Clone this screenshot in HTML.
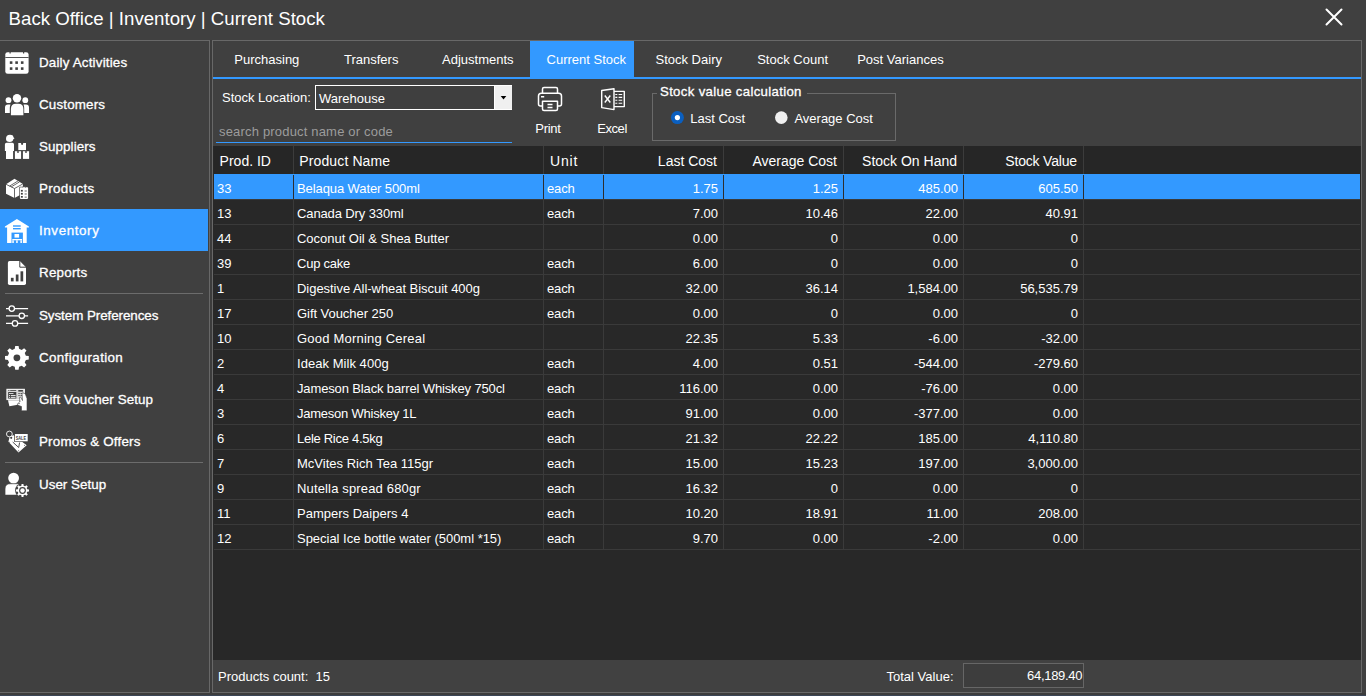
<!DOCTYPE html>
<html><head><meta charset="utf-8"><style>
html,body{margin:0;padding:0;width:1366px;height:696px;overflow:hidden;background:#404040;font-family:"Liberation Sans", sans-serif;}
.t{position:absolute;white-space:pre;line-height:1;}
.r{position:absolute;box-sizing:content-box;}
</style></head><body>
<div class="t" style="left:8.6px;top:9.70px;font-size:18.67px;color:#ffffff;font-weight:400;">Back Office | Inventory | Current Stock</div>
<svg class="r" style="left:1324px;top:7px" width="20" height="20" viewBox="0 0 20 20"><path d="M2.5 2.5 L17.5 17.5 M17.5 2.5 L2.5 17.5" stroke="#fff" stroke-width="2" stroke-linecap="round"/></svg>
<div class="r" style="left:210px;top:40px;width:2px;height:653px;background:#3c3c3c;"></div>
<div class="r" style="left:-1px;top:40px;width:209px;height:651px;border:1px solid #686868;"></div>
<div class="r" style="left:212px;top:40px;width:1148px;height:651px;border:1px solid #686868;"></div>
<div class="r" style="left:0px;top:693px;width:1366px;height:2px;background:#3c3c3c;"></div>
<div class="r" style="left:0px;top:695px;width:1366px;height:1px;background:#3a4556;"></div>
<div class="r" style="left:0px;top:209px;width:208px;height:42px;background:#3399ff;"></div>
<div class="r" style="left:5px;top:293px;width:198px;height:1px;background:#6c6c6c;"></div>
<div class="r" style="left:5px;top:462px;width:198px;height:1px;background:#6c6c6c;"></div>
<div class="t" style="left:39px;top:55.66px;font-size:13.4px;color:#ffffff;font-weight:400;-webkit-text-stroke:0.3px #fff;letter-spacing:0.170px;">Daily Activities</div>
<div class="t" style="left:39px;top:97.66px;font-size:13.4px;color:#ffffff;font-weight:400;-webkit-text-stroke:0.3px #fff;letter-spacing:0.163px;">Customers</div>
<div class="t" style="left:39px;top:139.66px;font-size:13.4px;color:#ffffff;font-weight:400;-webkit-text-stroke:0.3px #fff;letter-spacing:0.087px;">Suppliers</div>
<div class="t" style="left:39px;top:181.66px;font-size:13.4px;color:#ffffff;font-weight:400;-webkit-text-stroke:0.3px #fff;letter-spacing:0.336px;">Products</div>
<div class="t" style="left:39px;top:223.66px;font-size:13.4px;color:#ffffff;font-weight:400;-webkit-text-stroke:0.3px #fff;letter-spacing:0.600px;">Inventory</div>
<div class="t" style="left:39px;top:265.66px;font-size:13.4px;color:#ffffff;font-weight:400;-webkit-text-stroke:0.3px #fff;letter-spacing:0.217px;">Reports</div>
<div class="t" style="left:39px;top:308.66px;font-size:13.4px;color:#ffffff;font-weight:400;-webkit-text-stroke:0.3px #fff;letter-spacing:-0.068px;">System Preferences</div>
<div class="t" style="left:39px;top:350.66px;font-size:13.4px;color:#ffffff;font-weight:400;-webkit-text-stroke:0.3px #fff;letter-spacing:0.342px;">Configuration</div>
<div class="t" style="left:39px;top:392.66px;font-size:13.4px;color:#ffffff;font-weight:400;-webkit-text-stroke:0.3px #fff;letter-spacing:0.097px;">Gift Voucher Setup</div>
<div class="t" style="left:39px;top:434.66px;font-size:13.4px;color:#ffffff;font-weight:400;-webkit-text-stroke:0.3px #fff;letter-spacing:0.193px;">Promos &amp; Offers</div>
<div class="t" style="left:39px;top:477.66px;font-size:13.4px;color:#ffffff;font-weight:400;-webkit-text-stroke:0.3px #fff;letter-spacing:0.017px;">User Setup</div>
<svg class="r" style="left:0;top:0" width="36" height="696" viewBox="0 0 36 696"><rect x="5.3" y="52.2" width="23.3" height="21.6" rx="2.4" fill="#ffffff"/>
<rect x="5.3" y="57.1" width="23.3" height="0.9" fill="#404040"/>
<rect x="9.5" y="51.5" width="1.2" height="2" fill="#404040"/><rect x="23" y="51.5" width="1.2" height="2" fill="#404040"/>
<rect x="9.799999999999999" y="61.300000000000004" width="2.6" height="2.6" fill="#404040"/><rect x="9.799999999999999" y="67.3" width="2.6" height="2.6" fill="#404040"/><rect x="15.3" y="61.300000000000004" width="2.6" height="2.6" fill="#404040"/><rect x="15.3" y="67.3" width="2.6" height="2.6" fill="#404040"/><rect x="20.9" y="61.300000000000004" width="2.6" height="2.6" fill="#404040"/><rect x="20.9" y="67.3" width="2.6" height="2.6" fill="#404040"/><circle cx="17" cy="98.3" r="4.2" fill="#ffffff"/>
<circle cx="8.5" cy="100.2" r="2.9" fill="#ffffff"/><circle cx="25.3" cy="100.2" r="2.9" fill="#ffffff"/>
<path d="M5 113 V107.5 Q5 104.5 8 104.5 H10.5 Q9.8 106 9.8 108 V113 Z" fill="#ffffff"/>
<path d="M29 113 V107.5 Q29 104.5 26 104.5 H23.5 Q24.2 106 24.2 108 V113 Z" fill="#ffffff"/>
<path d="M10.9 115.3 V109 Q10.9 103.8 16 103.8 H18.3 Q23.4 103.8 23.4 109 V115.3 Z" fill="#ffffff"/>
<path d="M6 139 Q6 134.8 10 134.8 Q13.2 134.8 13.4 137.2 L14.5 138.3 L13.3 139.2 Q12.8 141.9 9.8 141.9 Q6 141.9 6 139 Z" fill="#ffffff"/>
<path d="M4.9 151 V144.4 Q4.9 142.8 6.5 142.8 H12.4 Q14 142.8 14 144.4 V151 H13.1 V158.9 H6 V151 Z" fill="#ffffff"/>
<rect x="18.3" y="143" width="7.7" height="7.1" fill="#ffffff"/><path d="M20.9 143 H23.3 L22.6 145 H21.6 Z" fill="#404040"/>
<rect x="14.9" y="151.2" width="6.2" height="7.7" fill="#ffffff"/><path d="M16.9 151.2 H19.1 L18.5 153 H17.5 Z" fill="#404040"/>
<rect x="22.9" y="151.2" width="6.2" height="7.7" fill="#ffffff"/><path d="M24.9 151.2 H27.1 L26.5 153 H25.5 Z" fill="#404040"/>
<path d="M6 184.3 L14.5 178.8 L22.9 183.9 L22.9 193.5 L14.5 198.1 L6 193.7 Z" fill="#ffffff"/>
<path d="M6 184.3 L14.5 188.5 L22.9 183.9 M14.5 188.5 V198.1 M9.6 186.1 L17.9 181 M11.2 186.9 L19.5 181.9" stroke="#404040" stroke-width="0.8" fill="none"/>
<rect x="19.3" y="186.7" width="9.4" height="12.8" rx="1" fill="#404040"/>
<rect x="19.9" y="187.3" width="8.2" height="11.6" rx="0.8" fill="#ffffff"/>
<rect x="21.9" y="186.8" width="4" height="1.2" rx="0.5" fill="#404040"/><rect x="22.3" y="186.9" width="3.2" height="0.9" fill="#ffffff"/>
<g fill="#404040"><rect x="20.9" y="189.9" width="1.9" height="1.7"/><rect x="20.9" y="192.9" width="1.9" height="1.7"/><rect x="20.9" y="196" width="1.9" height="1.7"/>
<rect x="24.6" y="190.6" width="2.2" height="0.8"/><rect x="24.6" y="193.6" width="2.2" height="0.8"/><rect x="24.6" y="196.7" width="2.2" height="0.8"/></g>
<path d="M4.9 226.5 L16.9 218.9 L28.9 226.5 L28.9 227.6 L26.7 227.6 L26.7 243 L7.1 243 L7.1 227.6 L4.9 227.6 Z" fill="#ffffff"/>
<rect x="13" y="225.3" width="7.7" height="1.4" fill="#3399ff"/><rect x="13" y="228" width="7.7" height="1.4" fill="#3399ff"/>
<rect x="11.5" y="232.6" width="11.4" height="10.4" fill="#3399ff"/>
<rect x="14.5" y="234" width="4.6" height="3.6" fill="#ffffff"/>
<rect x="12.3" y="239" width="9.8" height="1.3" fill="#ffffff"/>
<rect x="12.3" y="240.3" width="1.5" height="2.7" fill="#ffffff"/><rect x="16.2" y="240.3" width="1.5" height="2.7" fill="#ffffff"/><rect x="20.4" y="240.3" width="1.5" height="2.7" fill="#ffffff"/>
<path d="M9.5 261 H19.8 L26 267.2 V283.2 Q26 285 24.3 285 H9.6 Q7.9 285 7.9 283.2 V262.7 Q7.9 261 9.5 261 Z" fill="#ffffff"/>
<path d="M19.8 261 V267.2 H26" stroke="#404040" stroke-width="1" fill="none"/>
<rect x="10.9" y="277.8" width="2.7" height="3.6" fill="#404040"/><rect x="15.8" y="274.5" width="2.7" height="6.9" fill="#404040"/><rect x="20.5" y="271.3" width="2.7" height="10.1" fill="#404040"/>
<g stroke="#ffffff" stroke-width="1.3" fill="none">
<path d="M6 308.6 H9 M14.6 308.6 H28.1"/><circle cx="11.8" cy="308.6" r="2.7"/>
<path d="M6 315.8 H19 M24.6 315.8 H28.1"/><circle cx="21.8" cy="315.8" r="2.7"/>
<path d="M6 323.4 H12.2 M17.8 323.4 H28.1"/><circle cx="15" cy="323.4" r="2.7"/>
</g><polygon points="25.85,355.65 28.78,356.11 28.78,359.49 25.85,359.95 24.74,362.61 26.50,365.01 24.11,367.40 21.71,365.64 19.05,366.75 18.59,369.68 15.21,369.68 14.75,366.75 12.09,365.64 9.69,367.40 7.30,365.01 9.06,362.61 7.95,359.95 5.02,359.49 5.02,356.11 7.95,355.65 9.06,352.99 7.30,350.59 9.69,348.20 12.09,349.96 14.75,348.85 15.21,345.92 18.59,345.92 19.05,348.85 21.71,349.96 24.11,348.20 26.50,350.59 24.74,352.99" fill="#ffffff"/><circle cx="16.9" cy="357.8" r="3.4" fill="#404040"/><path d="M8 400.3 L19.8 400.3 L19.2 404.6 L9.4 406.2 Z" fill="#ffffff"/>
<rect x="6.4" y="388.8" width="18.5" height="11.3" fill="#ffffff"/>
<rect x="7.2" y="389.6" width="16.9" height="9.7" fill="#d8d8d8"/>
<g fill="#404040"><rect x="8.2" y="390" width="1.2" height="0.8"/><rect x="10.2" y="390" width="6" height="0.8"/><rect x="18.3" y="390" width="4.6" height="1.6"/>
<rect x="18.3" y="393.1" width="1.5" height="0.8"/><rect x="20.5" y="393.1" width="2.4" height="0.8"/><rect x="18.3" y="395.1" width="1.5" height="0.8"/><rect x="20.5" y="395.1" width="2.4" height="0.8"/>
<rect x="8.2" y="392" width="8.1" height="6.5"/></g>
<g fill="#e0e0e0"><rect x="9" y="395" width="1.2" height="1.2"/><rect x="11" y="395" width="4.6" height="1.2"/><rect x="9" y="397" width="1.2" height="0.9"/><rect x="11" y="397" width="4.6" height="0.9"/><rect x="9" y="393" width="4.5" height="0.9"/></g>
<path d="M22 393 Q24.5 392.5 25.5 394.5 L27 398.5 L27 410.8 L21.5 410.8 L21.5 406.5 Q19.5 406 17.5 404.8 Q16.8 403.8 18 403.3 L19.5 403.6 Q18 402.5 19.5 402 L20 401.5 L19.4 398 Q19.4 396.8 20.5 397 L22.5 400.5 L22 393 Z" fill="#ffffff" stroke="#404040" stroke-width="0.6"/>
<circle cx="9.4" cy="434" r="2.9" stroke="#e8e8e8" stroke-width="1" fill="none"/>
<path d="M8.4 441.7 L9.8 436.2 L13.8 435.3 L15 436.5 L26.7 445.3 L18.5 452.5 Z" fill="#ffffff"/>
<path d="M12.7 442 L18.7 447.5 L19.6 442.5" stroke="#404040" stroke-width="0.9" fill="none"/>
<circle cx="11.2" cy="437.8" r="1.1" fill="#404040"/>
<circle cx="9.2" cy="442.2" r="0.5" fill="#404040"/><circle cx="24.6" cy="445.2" r="0.5" fill="#404040"/><circle cx="18.6" cy="450.8" r="0.5" fill="#404040"/>
<rect x="14.2" y="433.6" width="14" height="8.3" fill="#404040"/>
<rect x="14.9" y="434" width="12.8" height="7.3" fill="#ffffff"/>
<text x="15.7" y="439.9" font-family="Liberation Sans" font-weight="bold" font-size="5.6" textLength="10.4" lengthAdjust="spacingAndGlyphs" fill="#404040">SALE</text>
<circle cx="13.6" cy="478.1" r="5.4" fill="#ffffff"/>
<path d="M5.1 495 V489 Q5.1 483.8 10.5 483.8 H17 Q19 483.8 20 485 L17 495 Z" fill="#ffffff" stroke="#404040" stroke-width="0.5"/>
<circle cx="22.5" cy="490.5" r="7.3999999999999995" fill="#404040"/><polygon points="27.26,489.36 29.03,489.57 29.03,491.43 27.26,491.64 26.68,493.06 27.78,494.46 26.46,495.78 25.06,494.68 23.64,495.26 23.43,497.03 21.57,497.03 21.36,495.26 19.94,494.68 18.54,495.78 17.22,494.46 18.32,493.06 17.74,491.64 15.97,491.43 15.97,489.57 17.74,489.36 18.32,487.94 17.22,486.54 18.54,485.22 19.94,486.32 21.36,485.74 21.57,483.97 23.43,483.97 23.64,485.74 25.06,486.32 26.46,485.22 27.78,486.54 26.68,487.94" fill="#ffffff"/><circle cx="22.5" cy="490.5" r="3.4000000000000004" fill="#404040"/><circle cx="22.5" cy="490.5" r="2.2" fill="#ffffff"/></svg>
<div class="r" style="left:530px;top:41px;width:104px;height:36px;background:#3399ff;"></div>
<div class="r" style="left:213px;top:77px;width:1148px;height:2px;background:#3399ff;"></div>
<div class="t" style="left:234.3px;top:53.00px;font-size:13px;color:#ffffff;font-weight:400;">Purchasing</div>
<div class="t" style="left:344px;top:53.00px;font-size:13px;color:#ffffff;font-weight:400;">Transfers</div>
<div class="t" style="left:442px;top:53.00px;font-size:13px;color:#ffffff;font-weight:400;">Adjustments</div>
<div class="t" style="left:546.6px;top:53.00px;font-size:13px;color:#ffffff;font-weight:400;">Current Stock</div>
<div class="t" style="left:655.5px;top:53.00px;font-size:13px;color:#ffffff;font-weight:400;">Stock Dairy</div>
<div class="t" style="left:757.2px;top:53.00px;font-size:13px;color:#ffffff;font-weight:400;">Stock Count</div>
<div class="t" style="left:857.2px;top:53.00px;font-size:13px;color:#ffffff;font-weight:400;">Post Variances</div>
<div class="t" style="left:222px;top:91.00px;font-size:13px;color:#ffffff;font-weight:400;">Stock Location:</div>
<div class="r" style="left:315px;top:85px;width:195px;height:23px;border:1px solid #fff;background:#3f3f3f"></div>
<div class="r" style="left:494px;top:86px;width:17px;height:23px;background:#f0f0f0;border-left:1px solid #fff;"></div>
<svg class="r" style="left:499px;top:95px" width="9" height="6" viewBox="0 0 9 6"><path d="M1.7 1 H7.3 L4.5 4.6 Z" fill="#000"/></svg>
<div class="t" style="left:319px;top:91.50px;font-size:13px;color:#ffffff;font-weight:400;">Warehouse</div>
<div class="t" style="left:219px;top:125.00px;font-size:13px;color:#9c9c9c;font-weight:400;letter-spacing:0.18px;">search product name or code</div>
<div class="r" style="left:216px;top:142px;width:296px;height:1px;background:#3399ff;"></div>
<svg class="r" style="left:536px;top:85px" width="28" height="28" viewBox="0 0 28 28"><g fill="none" stroke="#fff" stroke-width="1.5" stroke-linejoin="round">
<path d="M6.5 8 V4 Q6.5 2.5 8 2.5 H20 Q21.5 2.5 21.5 4 V8"/>
<path d="M6 21 H4.5 Q2.5 21 2.5 19 V11 Q2.5 8.2 5.3 8.2 H22.7 Q25.5 8.2 25.5 11 V19 Q25.5 21 23.5 21 H22"/>
<path d="M6.5 16.3 H21.5 V24 Q21.5 25.5 20 25.5 H8 Q6.5 25.5 6.5 24 Z"/>
<path d="M5 11.8 H8.2 M11.5 19.6 H16.5 M11.5 22.4 H16.5"/></g></svg>
<div class="t" style="left:535.3px;top:122.00px;font-size:13px;color:#ffffff;font-weight:400;letter-spacing:-0.3px;">Print</div>
<svg class="r" style="left:599px;top:86px" width="28" height="28" viewBox="0 0 28 28"><g fill="none" stroke="#fff" stroke-width="1.4" stroke-linejoin="round">
<path d="M2.7 4.5 L15 2.7 V23.6 L2.7 21.6 Z"/>
<path d="M15 5.4 H25.3 V20.6 H15"/>
<path d="M5.8 9.5 L11.3 16.5 M11.3 9.5 L5.8 16.5"/>
<path d="M16.3 8.5 H18.3 M19.6 8.5 H23.2 M16.3 11.4 H18.3 M19.6 11.4 H23.2 M16.3 14.3 H18.3 M19.6 14.3 H23.2 M16.3 17.2 H18.3 M19.6 17.2 H23.2" stroke-width="1.1"/></g></svg>
<div class="t" style="left:597.3px;top:122.00px;font-size:13px;color:#ffffff;font-weight:400;letter-spacing:-0.45px;">Excel</div>
<div class="r" style="left:652px;top:93px;width:242px;height:46px;border:1px solid #6a6a6a"></div>
<div class="r" style="left:657px;top:90px;width:150px;height:8px;background:#404040;"></div>
<div class="t" style="left:660px;top:84.83px;font-size:13.2px;color:#ffffff;font-weight:400;-webkit-text-stroke:0.3px #fff;letter-spacing:0.33px;">Stock value calculation</div>
<svg class="r" style="left:668px;top:108px" width="120" height="20" viewBox="0 0 120 20"><circle cx="9.4" cy="9.6" r="6.5" fill="#0a5fc0"/><circle cx="9.4" cy="9.6" r="2.6" fill="#fff"/><circle cx="113.3" cy="9.6" r="6.3" fill="#f0f0f0"/></svg>
<div class="t" style="left:690.3px;top:112.00px;font-size:13px;color:#ffffff;font-weight:400;">Last Cost</div>
<div class="t" style="left:794.4px;top:112.00px;font-size:13px;color:#ffffff;font-weight:400;">Average Cost</div>
<div class="r" style="left:213px;top:146px;width:1148px;height:514px;background:#282828;"></div>
<div class="r" style="left:214px;top:146px;width:1146px;height:28px;background:#262626;"></div>
<div class="t" style="left:219.6px;top:154.15px;font-size:14px;color:#ffffff;font-weight:400;letter-spacing:0px;">Prod. ID</div>
<div class="t" style="left:299.3px;top:154.15px;font-size:14px;color:#ffffff;font-weight:400;letter-spacing:0.12px;">Product Name</div>
<div class="t" style="left:550px;top:154.15px;font-size:14px;color:#ffffff;font-weight:400;letter-spacing:0.8px;">Unit</div>
<div class="t" style="right:649px;top:154.15px;font-size:14px;color:#ffffff;font-weight:400;text-align:right;letter-spacing:0px;">Last Cost</div>
<div class="t" style="right:529px;top:154.15px;font-size:14px;color:#ffffff;font-weight:400;text-align:right;letter-spacing:0px;">Average Cost</div>
<div class="t" style="right:409px;top:154.15px;font-size:14px;color:#ffffff;font-weight:400;text-align:right;letter-spacing:0px;">Stock On Hand</div>
<div class="t" style="right:289.20000000000005px;top:154.15px;font-size:14px;color:#ffffff;font-weight:400;text-align:right;letter-spacing:-0.2px;">Stock Value</div>
<div class="r" style="left:214px;top:174px;width:1146px;height:25px;background:#3399ff;"></div>
<div class="r" style="left:214px;top:199px;width:870px;height:1px;background:#3a3a3a;"></div>
<div class="r" style="left:1084px;top:199px;width:276px;height:1px;background:#3a3a3a;"></div>
<div class="r" style="left:214px;top:224px;width:870px;height:1px;background:#3a3a3a;"></div>
<div class="r" style="left:1084px;top:224px;width:276px;height:1px;background:#3a3a3a;"></div>
<div class="r" style="left:214px;top:249px;width:870px;height:1px;background:#3a3a3a;"></div>
<div class="r" style="left:1084px;top:249px;width:276px;height:1px;background:#3a3a3a;"></div>
<div class="r" style="left:214px;top:274px;width:870px;height:1px;background:#3a3a3a;"></div>
<div class="r" style="left:1084px;top:274px;width:276px;height:1px;background:#3a3a3a;"></div>
<div class="r" style="left:214px;top:299px;width:870px;height:1px;background:#3a3a3a;"></div>
<div class="r" style="left:1084px;top:299px;width:276px;height:1px;background:#3a3a3a;"></div>
<div class="r" style="left:214px;top:324px;width:870px;height:1px;background:#3a3a3a;"></div>
<div class="r" style="left:1084px;top:324px;width:276px;height:1px;background:#3a3a3a;"></div>
<div class="r" style="left:214px;top:349px;width:870px;height:1px;background:#3a3a3a;"></div>
<div class="r" style="left:1084px;top:349px;width:276px;height:1px;background:#3a3a3a;"></div>
<div class="r" style="left:214px;top:374px;width:870px;height:1px;background:#3a3a3a;"></div>
<div class="r" style="left:1084px;top:374px;width:276px;height:1px;background:#3a3a3a;"></div>
<div class="r" style="left:214px;top:399px;width:870px;height:1px;background:#3a3a3a;"></div>
<div class="r" style="left:1084px;top:399px;width:276px;height:1px;background:#3a3a3a;"></div>
<div class="r" style="left:214px;top:424px;width:870px;height:1px;background:#3a3a3a;"></div>
<div class="r" style="left:1084px;top:424px;width:276px;height:1px;background:#3a3a3a;"></div>
<div class="r" style="left:214px;top:449px;width:870px;height:1px;background:#3a3a3a;"></div>
<div class="r" style="left:1084px;top:449px;width:276px;height:1px;background:#3a3a3a;"></div>
<div class="r" style="left:214px;top:474px;width:870px;height:1px;background:#3a3a3a;"></div>
<div class="r" style="left:1084px;top:474px;width:276px;height:1px;background:#3a3a3a;"></div>
<div class="r" style="left:214px;top:499px;width:870px;height:1px;background:#3a3a3a;"></div>
<div class="r" style="left:1084px;top:499px;width:276px;height:1px;background:#3a3a3a;"></div>
<div class="r" style="left:214px;top:524px;width:870px;height:1px;background:#3a3a3a;"></div>
<div class="r" style="left:1084px;top:524px;width:276px;height:1px;background:#3a3a3a;"></div>
<div class="r" style="left:214px;top:549px;width:870px;height:1px;background:#3a3a3a;"></div>
<div class="r" style="left:1084px;top:549px;width:276px;height:1px;background:#3a3a3a;"></div>
<div class="r" style="left:293px;top:146px;width:1px;height:28px;background:#3c3c3c;"></div>
<div class="r" style="left:293px;top:175px;width:1px;height:24px;background:#2e2e2e;"></div>
<div class="r" style="left:293px;top:199px;width:1px;height:351px;background:#3a3a3a;"></div>
<div class="r" style="left:543px;top:146px;width:1px;height:28px;background:#3c3c3c;"></div>
<div class="r" style="left:543px;top:175px;width:1px;height:24px;background:#2e2e2e;"></div>
<div class="r" style="left:543px;top:199px;width:1px;height:351px;background:#3a3a3a;"></div>
<div class="r" style="left:603px;top:146px;width:1px;height:28px;background:#3c3c3c;"></div>
<div class="r" style="left:603px;top:175px;width:1px;height:24px;background:#2e2e2e;"></div>
<div class="r" style="left:603px;top:199px;width:1px;height:351px;background:#3a3a3a;"></div>
<div class="r" style="left:723px;top:146px;width:1px;height:28px;background:#3c3c3c;"></div>
<div class="r" style="left:723px;top:175px;width:1px;height:24px;background:#2e2e2e;"></div>
<div class="r" style="left:723px;top:199px;width:1px;height:351px;background:#3a3a3a;"></div>
<div class="r" style="left:843px;top:146px;width:1px;height:28px;background:#3c3c3c;"></div>
<div class="r" style="left:843px;top:175px;width:1px;height:24px;background:#2e2e2e;"></div>
<div class="r" style="left:843px;top:199px;width:1px;height:351px;background:#3a3a3a;"></div>
<div class="r" style="left:963px;top:146px;width:1px;height:28px;background:#3c3c3c;"></div>
<div class="r" style="left:963px;top:175px;width:1px;height:24px;background:#2e2e2e;"></div>
<div class="r" style="left:963px;top:199px;width:1px;height:351px;background:#3a3a3a;"></div>
<div class="r" style="left:1083px;top:146px;width:1px;height:28px;background:#3c3c3c;"></div>
<div class="r" style="left:1083px;top:175px;width:1px;height:24px;background:#2e2e2e;"></div>
<div class="r" style="left:1083px;top:199px;width:1px;height:351px;background:#3a3a3a;"></div>
<div class="t" style="left:217px;top:182.00px;font-size:13px;color:#ffffff;font-weight:400;">33</div>
<div class="t" style="left:297px;top:182.00px;font-size:13px;color:#ffffff;font-weight:400;letter-spacing:-0.092px;">Belaqua Water 500ml</div>
<div class="t" style="left:547px;top:182.00px;font-size:13px;color:#ffffff;font-weight:400;letter-spacing:-0.12px;">each</div>
<div class="t" style="right:648px;top:182.00px;font-size:13px;color:#ffffff;font-weight:400;text-align:right;">1.75</div>
<div class="t" style="right:528px;top:182.00px;font-size:13px;color:#ffffff;font-weight:400;text-align:right;">1.25</div>
<div class="t" style="right:408px;top:182.00px;font-size:13px;color:#ffffff;font-weight:400;text-align:right;">485.00</div>
<div class="t" style="right:288px;top:182.00px;font-size:13px;color:#ffffff;font-weight:400;text-align:right;">605.50</div>
<div class="t" style="left:217px;top:207.00px;font-size:13px;color:#ffffff;font-weight:400;">13</div>
<div class="t" style="left:297px;top:207.00px;font-size:13px;color:#ffffff;font-weight:400;letter-spacing:-0.120px;">Canada Dry 330ml</div>
<div class="t" style="left:547px;top:207.00px;font-size:13px;color:#ffffff;font-weight:400;letter-spacing:-0.12px;">each</div>
<div class="t" style="right:648px;top:207.00px;font-size:13px;color:#ffffff;font-weight:400;text-align:right;">7.00</div>
<div class="t" style="right:528px;top:207.00px;font-size:13px;color:#ffffff;font-weight:400;text-align:right;">10.46</div>
<div class="t" style="right:408px;top:207.00px;font-size:13px;color:#ffffff;font-weight:400;text-align:right;">22.00</div>
<div class="t" style="right:288px;top:207.00px;font-size:13px;color:#ffffff;font-weight:400;text-align:right;">40.91</div>
<div class="t" style="left:217px;top:232.00px;font-size:13px;color:#ffffff;font-weight:400;">44</div>
<div class="t" style="left:297px;top:232.00px;font-size:13px;color:#ffffff;font-weight:400;letter-spacing:-0.020px;">Coconut Oil &amp; Shea Butter</div>
<div class="t" style="left:547px;top:232.00px;font-size:13px;color:#ffffff;font-weight:400;letter-spacing:-0.12px;"></div>
<div class="t" style="right:648px;top:232.00px;font-size:13px;color:#ffffff;font-weight:400;text-align:right;">0.00</div>
<div class="t" style="right:528px;top:232.00px;font-size:13px;color:#ffffff;font-weight:400;text-align:right;">0</div>
<div class="t" style="right:408px;top:232.00px;font-size:13px;color:#ffffff;font-weight:400;text-align:right;">0.00</div>
<div class="t" style="right:288px;top:232.00px;font-size:13px;color:#ffffff;font-weight:400;text-align:right;">0</div>
<div class="t" style="left:217px;top:257.00px;font-size:13px;color:#ffffff;font-weight:400;">39</div>
<div class="t" style="left:297px;top:257.00px;font-size:13px;color:#ffffff;font-weight:400;letter-spacing:-0.234px;">Cup cake</div>
<div class="t" style="left:547px;top:257.00px;font-size:13px;color:#ffffff;font-weight:400;letter-spacing:-0.12px;">each</div>
<div class="t" style="right:648px;top:257.00px;font-size:13px;color:#ffffff;font-weight:400;text-align:right;">6.00</div>
<div class="t" style="right:528px;top:257.00px;font-size:13px;color:#ffffff;font-weight:400;text-align:right;">0</div>
<div class="t" style="right:408px;top:257.00px;font-size:13px;color:#ffffff;font-weight:400;text-align:right;">0.00</div>
<div class="t" style="right:288px;top:257.00px;font-size:13px;color:#ffffff;font-weight:400;text-align:right;">0</div>
<div class="t" style="left:217px;top:282.00px;font-size:13px;color:#ffffff;font-weight:400;">1</div>
<div class="t" style="left:297px;top:282.00px;font-size:13px;color:#ffffff;font-weight:400;letter-spacing:-0.043px;">Digestive All-wheat Biscuit 400g</div>
<div class="t" style="left:547px;top:282.00px;font-size:13px;color:#ffffff;font-weight:400;letter-spacing:-0.12px;">each</div>
<div class="t" style="right:648px;top:282.00px;font-size:13px;color:#ffffff;font-weight:400;text-align:right;">32.00</div>
<div class="t" style="right:528px;top:282.00px;font-size:13px;color:#ffffff;font-weight:400;text-align:right;">36.14</div>
<div class="t" style="right:408px;top:282.00px;font-size:13px;color:#ffffff;font-weight:400;text-align:right;">1,584.00</div>
<div class="t" style="right:288px;top:282.00px;font-size:13px;color:#ffffff;font-weight:400;text-align:right;">56,535.79</div>
<div class="t" style="left:217px;top:307.00px;font-size:13px;color:#ffffff;font-weight:400;">17</div>
<div class="t" style="left:297px;top:307.00px;font-size:13px;color:#ffffff;font-weight:400;letter-spacing:-0.047px;">Gift Voucher 250</div>
<div class="t" style="left:547px;top:307.00px;font-size:13px;color:#ffffff;font-weight:400;letter-spacing:-0.12px;">each</div>
<div class="t" style="right:648px;top:307.00px;font-size:13px;color:#ffffff;font-weight:400;text-align:right;">0.00</div>
<div class="t" style="right:528px;top:307.00px;font-size:13px;color:#ffffff;font-weight:400;text-align:right;">0</div>
<div class="t" style="right:408px;top:307.00px;font-size:13px;color:#ffffff;font-weight:400;text-align:right;">0.00</div>
<div class="t" style="right:288px;top:307.00px;font-size:13px;color:#ffffff;font-weight:400;text-align:right;">0</div>
<div class="t" style="left:217px;top:332.00px;font-size:13px;color:#ffffff;font-weight:400;">10</div>
<div class="t" style="left:297px;top:332.00px;font-size:13px;color:#ffffff;font-weight:400;letter-spacing:0.208px;">Good Morning Cereal</div>
<div class="t" style="left:547px;top:332.00px;font-size:13px;color:#ffffff;font-weight:400;letter-spacing:-0.12px;"></div>
<div class="t" style="right:648px;top:332.00px;font-size:13px;color:#ffffff;font-weight:400;text-align:right;">22.35</div>
<div class="t" style="right:528px;top:332.00px;font-size:13px;color:#ffffff;font-weight:400;text-align:right;">5.33</div>
<div class="t" style="right:408px;top:332.00px;font-size:13px;color:#ffffff;font-weight:400;text-align:right;">-6.00</div>
<div class="t" style="right:288px;top:332.00px;font-size:13px;color:#ffffff;font-weight:400;text-align:right;">-32.00</div>
<div class="t" style="left:217px;top:357.00px;font-size:13px;color:#ffffff;font-weight:400;">2</div>
<div class="t" style="left:297px;top:357.00px;font-size:13px;color:#ffffff;font-weight:400;letter-spacing:0.044px;">Ideak Milk 400g</div>
<div class="t" style="left:547px;top:357.00px;font-size:13px;color:#ffffff;font-weight:400;letter-spacing:-0.12px;">each</div>
<div class="t" style="right:648px;top:357.00px;font-size:13px;color:#ffffff;font-weight:400;text-align:right;">4.00</div>
<div class="t" style="right:528px;top:357.00px;font-size:13px;color:#ffffff;font-weight:400;text-align:right;">0.51</div>
<div class="t" style="right:408px;top:357.00px;font-size:13px;color:#ffffff;font-weight:400;text-align:right;">-544.00</div>
<div class="t" style="right:288px;top:357.00px;font-size:13px;color:#ffffff;font-weight:400;text-align:right;">-279.60</div>
<div class="t" style="left:217px;top:382.00px;font-size:13px;color:#ffffff;font-weight:400;">4</div>
<div class="t" style="left:297px;top:382.00px;font-size:13px;color:#ffffff;font-weight:400;letter-spacing:-0.135px;">Jameson Black barrel Whiskey 750cl</div>
<div class="t" style="left:547px;top:382.00px;font-size:13px;color:#ffffff;font-weight:400;letter-spacing:-0.12px;">each</div>
<div class="t" style="right:648px;top:382.00px;font-size:13px;color:#ffffff;font-weight:400;text-align:right;">116.00</div>
<div class="t" style="right:528px;top:382.00px;font-size:13px;color:#ffffff;font-weight:400;text-align:right;">0.00</div>
<div class="t" style="right:408px;top:382.00px;font-size:13px;color:#ffffff;font-weight:400;text-align:right;">-76.00</div>
<div class="t" style="right:288px;top:382.00px;font-size:13px;color:#ffffff;font-weight:400;text-align:right;">0.00</div>
<div class="t" style="left:217px;top:407.00px;font-size:13px;color:#ffffff;font-weight:400;">3</div>
<div class="t" style="left:297px;top:407.00px;font-size:13px;color:#ffffff;font-weight:400;letter-spacing:-0.238px;">Jameson Whiskey 1L</div>
<div class="t" style="left:547px;top:407.00px;font-size:13px;color:#ffffff;font-weight:400;letter-spacing:-0.12px;">each</div>
<div class="t" style="right:648px;top:407.00px;font-size:13px;color:#ffffff;font-weight:400;text-align:right;">91.00</div>
<div class="t" style="right:528px;top:407.00px;font-size:13px;color:#ffffff;font-weight:400;text-align:right;">0.00</div>
<div class="t" style="right:408px;top:407.00px;font-size:13px;color:#ffffff;font-weight:400;text-align:right;">-377.00</div>
<div class="t" style="right:288px;top:407.00px;font-size:13px;color:#ffffff;font-weight:400;text-align:right;">0.00</div>
<div class="t" style="left:217px;top:432.00px;font-size:13px;color:#ffffff;font-weight:400;">6</div>
<div class="t" style="left:297px;top:432.00px;font-size:13px;color:#ffffff;font-weight:400;letter-spacing:-0.284px;">Lele Rice 4.5kg</div>
<div class="t" style="left:547px;top:432.00px;font-size:13px;color:#ffffff;font-weight:400;letter-spacing:-0.12px;">each</div>
<div class="t" style="right:648px;top:432.00px;font-size:13px;color:#ffffff;font-weight:400;text-align:right;">21.32</div>
<div class="t" style="right:528px;top:432.00px;font-size:13px;color:#ffffff;font-weight:400;text-align:right;">22.22</div>
<div class="t" style="right:408px;top:432.00px;font-size:13px;color:#ffffff;font-weight:400;text-align:right;">185.00</div>
<div class="t" style="right:288px;top:432.00px;font-size:13px;color:#ffffff;font-weight:400;text-align:right;">4,110.80</div>
<div class="t" style="left:217px;top:457.00px;font-size:13px;color:#ffffff;font-weight:400;">7</div>
<div class="t" style="left:297px;top:457.00px;font-size:13px;color:#ffffff;font-weight:400;letter-spacing:0.013px;">McVites Rich Tea 115gr</div>
<div class="t" style="left:547px;top:457.00px;font-size:13px;color:#ffffff;font-weight:400;letter-spacing:-0.12px;">each</div>
<div class="t" style="right:648px;top:457.00px;font-size:13px;color:#ffffff;font-weight:400;text-align:right;">15.00</div>
<div class="t" style="right:528px;top:457.00px;font-size:13px;color:#ffffff;font-weight:400;text-align:right;">15.23</div>
<div class="t" style="right:408px;top:457.00px;font-size:13px;color:#ffffff;font-weight:400;text-align:right;">197.00</div>
<div class="t" style="right:288px;top:457.00px;font-size:13px;color:#ffffff;font-weight:400;text-align:right;">3,000.00</div>
<div class="t" style="left:217px;top:482.00px;font-size:13px;color:#ffffff;font-weight:400;">9</div>
<div class="t" style="left:297px;top:482.00px;font-size:13px;color:#ffffff;font-weight:400;letter-spacing:0.154px;">Nutella spread 680gr</div>
<div class="t" style="left:547px;top:482.00px;font-size:13px;color:#ffffff;font-weight:400;letter-spacing:-0.12px;">each</div>
<div class="t" style="right:648px;top:482.00px;font-size:13px;color:#ffffff;font-weight:400;text-align:right;">16.32</div>
<div class="t" style="right:528px;top:482.00px;font-size:13px;color:#ffffff;font-weight:400;text-align:right;">0</div>
<div class="t" style="right:408px;top:482.00px;font-size:13px;color:#ffffff;font-weight:400;text-align:right;">0.00</div>
<div class="t" style="right:288px;top:482.00px;font-size:13px;color:#ffffff;font-weight:400;text-align:right;">0</div>
<div class="t" style="left:217px;top:507.00px;font-size:13px;color:#ffffff;font-weight:400;">11</div>
<div class="t" style="left:297px;top:507.00px;font-size:13px;color:#ffffff;font-weight:400;letter-spacing:0.011px;">Pampers Daipers 4</div>
<div class="t" style="left:547px;top:507.00px;font-size:13px;color:#ffffff;font-weight:400;letter-spacing:-0.12px;">each</div>
<div class="t" style="right:648px;top:507.00px;font-size:13px;color:#ffffff;font-weight:400;text-align:right;">10.20</div>
<div class="t" style="right:528px;top:507.00px;font-size:13px;color:#ffffff;font-weight:400;text-align:right;">18.91</div>
<div class="t" style="right:408px;top:507.00px;font-size:13px;color:#ffffff;font-weight:400;text-align:right;">11.00</div>
<div class="t" style="right:288px;top:507.00px;font-size:13px;color:#ffffff;font-weight:400;text-align:right;">208.00</div>
<div class="t" style="left:217px;top:532.00px;font-size:13px;color:#ffffff;font-weight:400;">12</div>
<div class="t" style="left:297px;top:532.00px;font-size:13px;color:#ffffff;font-weight:400;letter-spacing:-0.023px;">Special Ice bottle water (500ml *15)</div>
<div class="t" style="left:547px;top:532.00px;font-size:13px;color:#ffffff;font-weight:400;letter-spacing:-0.12px;">each</div>
<div class="t" style="right:648px;top:532.00px;font-size:13px;color:#ffffff;font-weight:400;text-align:right;">9.70</div>
<div class="t" style="right:528px;top:532.00px;font-size:13px;color:#ffffff;font-weight:400;text-align:right;">0.00</div>
<div class="t" style="right:408px;top:532.00px;font-size:13px;color:#ffffff;font-weight:400;text-align:right;">-2.00</div>
<div class="t" style="right:288px;top:532.00px;font-size:13px;color:#ffffff;font-weight:400;text-align:right;">0.00</div>
<div class="r" style="left:213px;top:660px;width:1148px;height:32px;background:#414141;"></div>
<div class="t" style="left:218px;top:669.60px;font-size:13px;color:#ffffff;font-weight:400;">Products count:&nbsp; 15</div>
<div class="t" style="right:412.5px;top:669.60px;font-size:13px;color:#ffffff;font-weight:400;text-align:right;">Total Value:</div>
<div class="r" style="left:963px;top:663px;width:119px;height:23px;border:1px solid #666;background:#3d3d3d"></div>
<div class="t" style="right:283.79999999999995px;top:668.50px;font-size:13px;color:#ffffff;font-weight:400;text-align:right;letter-spacing:-0.3px;">64,189.40</div>
</body></html>
